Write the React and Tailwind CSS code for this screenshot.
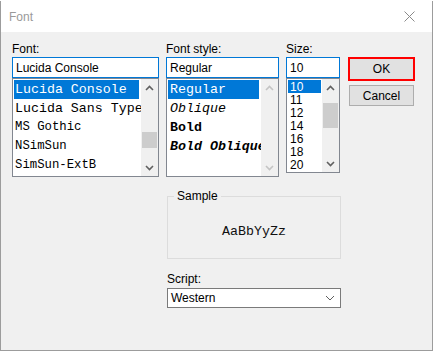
import React from "react";

const ui = { fontFamily: '"Liberation Sans", Arial, sans-serif' };
const mono = { fontFamily: '"Liberation Mono", "DejaVu Sans Mono", monospace' };

function Chev({ up, color = "#606060" }) {
  return (
    <svg width="9" height="6" viewBox="0 0 9 6">
      <path
        d={up ? "M1 5 L4.5 1.5 L8 5" : "M1 1 L4.5 4.5 L8 1"}
        fill="none"
        stroke={color}
        strokeWidth="1.6"
      />
    </svg>
  );
}

function ScrollBar({ thumbTop, thumbH, disabled }) {
  const c = disabled ? "#c4c4c4" : "#606060";
  return (
    <div className="flex w-[17px] shrink-0 flex-col bg-[#f0f0f0]">
      <div className="flex h-[17px] items-center justify-center">
        <Chev up color={c} />
      </div>
      <div className="relative flex-1">
        {!disabled && (
          <div
            className="absolute left-[1px] right-[1px] bg-[#cdcdcd]"
            style={{ top: thumbTop, height: thumbH }}
          />
        )}
      </div>
      <div className="flex h-[17px] items-center justify-center">
        <Chev color={c} />
      </div>
    </div>
  );
}

function Label({ children }) {
  return (
    <div className="h-[15px] text-[12px] leading-[15px] text-black" style={ui}>
      {children}
    </div>
  );
}

function Input({ children }) {
  return (
    <div
      className="flex h-[21px] items-center border border-[#0078d7] bg-white px-[3px] text-[12px] text-black"
      style={ui}
    >
      {children}
    </div>
  );
}

export default function App() {
  const fonts = [
    { t: "Lucida Console", s: { ...mono, fontSize: 13.3 } },
    { t: "Lucida Sans Type", s: { ...mono, fontSize: 13.3 } },
    { t: "MS Gothic", s: { ...mono, fontSize: 12.3 } },
    { t: "NSimSun", s: { ...mono, fontSize: 12.3 } },
    { t: "SimSun-ExtB", s: { ...mono, fontSize: 12.3 } },
  ];
  const styles = [
    { t: "Regular", c: "" },
    { t: "Oblique", c: "italic" },
    { t: "Bold", c: "font-bold" },
    { t: "Bold Oblique", c: "font-bold italic" },
  ];
  const sizes = ["10", "11", "12", "14", "16", "18", "20"];

  return (
    <div className="h-[352px] w-[434px] overflow-hidden bg-white pt-[1px]">
      <div className="flex h-[350px] w-[433px] flex-col border border-t-0 border-[#9c9c9c] bg-[#f0f0f0]">
        {/* Title bar */}
        <div className="flex h-[31px] shrink-0 items-center justify-between bg-white pl-[8px] pr-[17px]">
          <span className="text-[12px] text-[#9a9a9a]" style={ui}>
            Font
          </span>
          <svg width="11" height="11" viewBox="0 0 11 11">
            <path d="M0.5 0.5 L10.5 10.5 M10.5 0.5 L0.5 10.5" stroke="#8a8a8a" strokeWidth="1" />
          </svg>
        </div>

        {/* Client */}
        <div className="flex flex-col pl-[11px] pt-[10px]">
          <div className="flex items-start">
            {/* Font column */}
            <div className="flex w-[147px] flex-col">
              <Label>Font:</Label>
              <Input>Lucida Console</Input>
              <div className="flex h-[99px] border border-[#828790] bg-white">
                <div className="flex min-w-0 flex-1 flex-col overflow-hidden p-[1px] pr-[2px]">
                  {fonts.map((f, i) => (
                    <div
                      key={f.t}
                      className={`flex h-[19px] shrink-0 items-center whitespace-nowrap pl-[1px] ${
                        i === 0 ? "bg-[#0078d7] text-white" : "text-black"
                      }`}
                      style={f.s}
                    >
                      {f.t}
                    </div>
                  ))}
                </div>
                <ScrollBar thumbTop={36} thumbH={16} />
              </div>
            </div>

            {/* Style column */}
            <div className="ml-[7px] flex w-[113px] flex-col">
              <Label>Font style:</Label>
              <Input>Regular</Input>
              <div className="flex h-[99px] border border-[#828790] bg-white">
                <div className="flex min-w-0 flex-1 flex-col overflow-hidden p-[1px] pr-[2px]">
                  {styles.map((f, i) => (
                    <div
                      key={f.t}
                      className={`flex h-[19px] shrink-0 items-center whitespace-nowrap pl-[2px] text-[13.3px] ${f.c} ${
                        i === 0 ? "bg-[#0078d7] text-white" : "text-black"
                      }`}
                      style={mono}
                    >
                      {f.t}
                    </div>
                  ))}
                </div>
                <ScrollBar disabled />
              </div>
            </div>

            {/* Size column */}
            <div className="ml-[7px] flex w-[54px] flex-col">
              <Label>Size:</Label>
              <Input>10</Input>
              <div className="flex h-[95px] border border-[#828790] bg-white">
                <div className="flex min-w-0 flex-1 flex-col overflow-hidden p-[1px]">
                  {sizes.map((s, i) => (
                    <div
                      key={s}
                      className={`flex h-[13px] shrink-0 items-center pl-[2px] text-[12px] ${
                        i === 0 ? "bg-[#0078d7] text-white" : "text-black"
                      }`}
                      style={ui}
                    >
                      {s}
                    </div>
                  ))}
                </div>
                <ScrollBar thumbTop={7} thumbH={25} />
              </div>
            </div>

            {/* Buttons */}
            <div className="ml-[8px] mt-[15px] flex w-[67px] flex-col items-center">
              <div
                className="flex h-[24px] w-[67px] items-center justify-center border-[2px] border-[#ff0000] bg-[#e1e1e1] text-[12px] text-black"
                style={ui}
              >
                OK
              </div>
              <div
                className="mt-[4px] flex h-[21px] w-[65px] items-center justify-center border border-[#adadad] bg-[#e1e1e1] text-[12px] text-black"
                style={ui}
              >
                Cancel
              </div>
            </div>
          </div>

          {/* Sample + Script */}
          <div className="ml-[155px] mt-[19px] flex w-[174px] flex-col">
            <div className="relative flex h-[63px] items-center justify-center border border-[#dcdcdc]">
              <span
                className="absolute left-[6px] top-[-8px] bg-[#f0f0f0] px-[3px] text-[12px] leading-[15px] text-black"
                style={ui}
              >
                Sample
              </span>
              <span className="mt-[8px] text-[13.3px] text-[#111]" style={mono}>
                AaBbYyZz
              </span>
            </div>
            <div className="mt-[13px]">
              <Label>Script:</Label>
            </div>
            <div
              className="mt-[1px] flex h-[20px] items-center justify-between border border-[#7a7a7a] bg-white pl-[3px] pr-[5px] text-[12px] text-black"
              style={ui}
            >
              <span>Western</span>
              <svg width="10" height="6" viewBox="0 0 10 6">
                <path d="M1 1 L5 5 L9 1" fill="none" stroke="#606060" strokeWidth="1" />
              </svg>
            </div>
          </div>
        </div>
      </div>
    </div>
  );
}
